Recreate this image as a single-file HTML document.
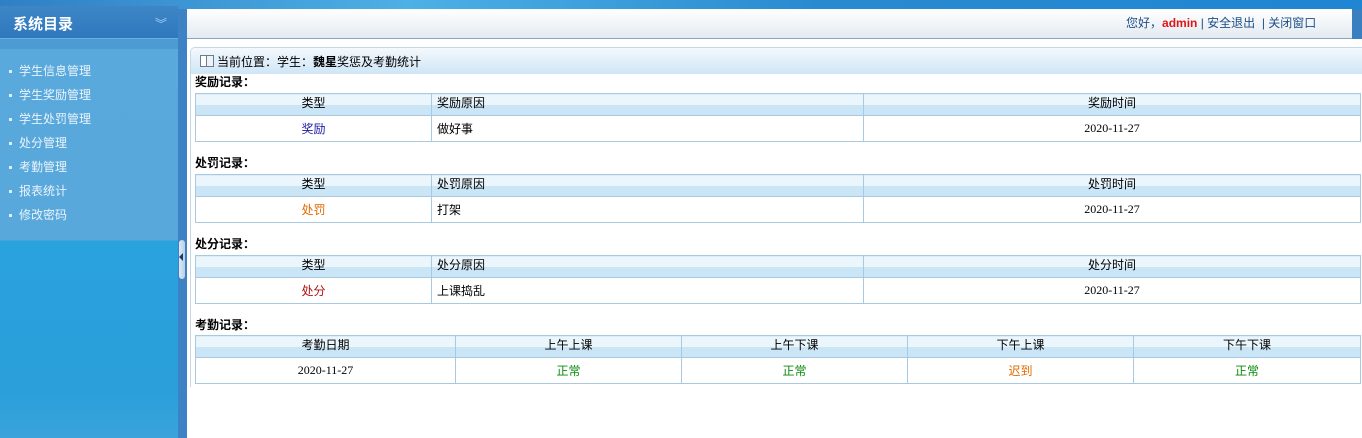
<!DOCTYPE html>
<html><head><meta charset="utf-8"><style>
*{margin:0;padding:0;box-sizing:border-box}
body{width:1362px;height:438px;overflow:hidden;background:#fff;font-family:"Liberation Sans","Noto Sans CJK SC",sans-serif;font-size:12px;position:relative}
.abs{position:absolute}
#top{left:0;top:0;width:1362px;height:9px;background:linear-gradient(90deg,#2f7fc4,#4db0e6 30%,#2a8ad0 60%,#1f86d3)}
#side{left:0;top:9px;width:178px;height:429px;background:linear-gradient(180deg,#5aa9dc 0,#58a8dc 231px,#2aa2dd 232px,#2a9fda 380px,#3aa3db 429px)}
#sidehd{left:0;top:6px;width:178px;height:33px;background:linear-gradient(180deg,#3d86c6,#2f78bd);color:#fff;font-size:15px;font-weight:bold;padding:7px 0 0 13px;border-bottom:1px solid #6eaede}
#sidehd2{left:0;top:39px;width:178px;height:10px;background:#4d9bd3}
#split{left:178px;top:9px;width:9px;height:429px;background:#3c82c4}
#handle{left:179px;top:240px;width:6px;height:39px;background:linear-gradient(90deg,#dfe9f4,#b8cfe6);border-radius:3px}
.menu{left:9px;color:#eaf4fc;font-size:12px}
.menu:before{content:"";display:inline-block;width:3px;height:3px;background:#dfeefa;margin-right:7px;vertical-align:middle}
#bar{left:187px;top:9px;width:1165px;height:30px;background:linear-gradient(180deg,#fff,#e3eaf1);border-radius:7px 7px 0 0;border-bottom:1px solid #8fa3b6}
#barr{left:1352px;top:9px;width:10px;height:30px;background:#3a7fc0}
#user{left:1126px;top:14px;color:#1d4f86;font-size:12px}
#panel{left:190px;top:47px;width:1172px;height:340px;border-left:1px solid #c7d6e4;border-top:1px solid #c7d6e4;border-radius:5px 0 0 0}
#pos{left:191px;top:48px;width:1171px;height:26px;background:linear-gradient(180deg,#f4f9fd,#cfe5f6);border-radius:5px 0 0 0;padding:5px 0 0 26px;font-size:12px;color:#000}
.ttl{left:195px;font-weight:bold;font-size:12px;color:#000}
table{position:absolute;left:195px;width:1166px;border-collapse:collapse;font-size:12px}
td{border:1px solid #a9c9e0;text-align:center}
tr.h td{height:22px;line-height:16px;padding-bottom:3px;background:linear-gradient(180deg,#eaf5fc 50%,#c9e5f6 50%);color:#000}
tr.d td{height:26px;font-family:"Liberation Serif","Noto Sans CJK SC",serif}
td.l{text-align:left;padding-left:5px;font-family:"Liberation Sans","Noto Sans CJK SC",sans-serif}
.s{font-family:"Liberation Sans","Noto Sans CJK SC",sans-serif !important}
</style></head><body>
<div id="top" class="abs"></div>
<div id="side" class="abs"></div>
<div id="sidehd" class="abs">系统目录<span style="position:absolute;left:155px;top:9px;font-size:12px;color:#a9d0ee;font-weight:normal">︾</span></div>
<div id="sidehd2" class="abs"></div>
<div class="abs menu" style="top:62px">学生信息管理</div>
<div class="abs menu" style="top:86px">学生奖励管理</div>
<div class="abs menu" style="top:110px">学生处罚管理</div>
<div class="abs menu" style="top:134px">处分管理</div>
<div class="abs menu" style="top:158px">考勤管理</div>
<div class="abs menu" style="top:182px">报表统计</div>
<div class="abs menu" style="top:206px">修改密码</div>
<div id="split" class="abs"></div>
<div id="handle" class="abs"><span style="position:absolute;left:0;top:13px;width:0;height:0;border-top:4px solid transparent;border-bottom:4px solid transparent;border-right:4px solid #1f3c66"></span></div>
<div id="bar" class="abs"></div>
<div id="barr" class="abs"></div>
<div id="user" class="abs">您好，<b style="color:#e01515">admin</b> | 安全退出 &nbsp;| 关闭窗口</div>
<div id="panel" class="abs"></div>
<div id="pos" class="abs"><span style="position:absolute;left:9px;top:7px;width:14px;height:12px;border:1px solid #6b7d8f;background:linear-gradient(90deg,#fff 5px,#6b7d8f 5px,#6b7d8f 6px,#eef3f8 6px)"></span>当前位置：学生：<b>魏星</b>奖惩及考勤统计</div>

<div class="abs ttl" style="top:73px">奖励记录：</div>
<table style="top:93px"><tr class="h"><td style="width:236px">类型</td><td class="l" style="width:432px">奖励原因</td><td>奖励时间</td></tr>
<tr class="d"><td class="s" style="color:#1a1aa0">奖励</td><td class="l">做好事</td><td>2020-11-27</td></tr></table>

<div class="abs ttl" style="top:154px">处罚记录：</div>
<table style="top:174px"><tr class="h"><td style="width:236px">类型</td><td class="l" style="width:432px">处罚原因</td><td>处罚时间</td></tr>
<tr class="d"><td class="s" style="color:#e06a00">处罚</td><td class="l">打架</td><td>2020-11-27</td></tr></table>

<div class="abs ttl" style="top:235px">处分记录：</div>
<table style="top:255px"><tr class="h"><td style="width:236px">类型</td><td class="l" style="width:432px">处分原因</td><td>处分时间</td></tr>
<tr class="d"><td class="s" style="color:#b01010">处分</td><td class="l">上课捣乱</td><td>2020-11-27</td></tr></table>

<div class="abs ttl" style="top:316px">考勤记录：</div>
<table style="top:335px"><tr class="h"><td style="width:260px">考勤日期</td><td style="width:226px">上午上课</td><td style="width:226px">上午下课</td><td style="width:226px">下午上课</td><td>下午下课</td></tr>
<tr class="d"><td>2020-11-27</td><td class="s" style="color:#0a8a0a">正常</td><td class="s" style="color:#0a8a0a">正常</td><td class="s" style="color:#e06a00">迟到</td><td class="s" style="color:#0a8a0a">正常</td></tr></table>
</body></html>
